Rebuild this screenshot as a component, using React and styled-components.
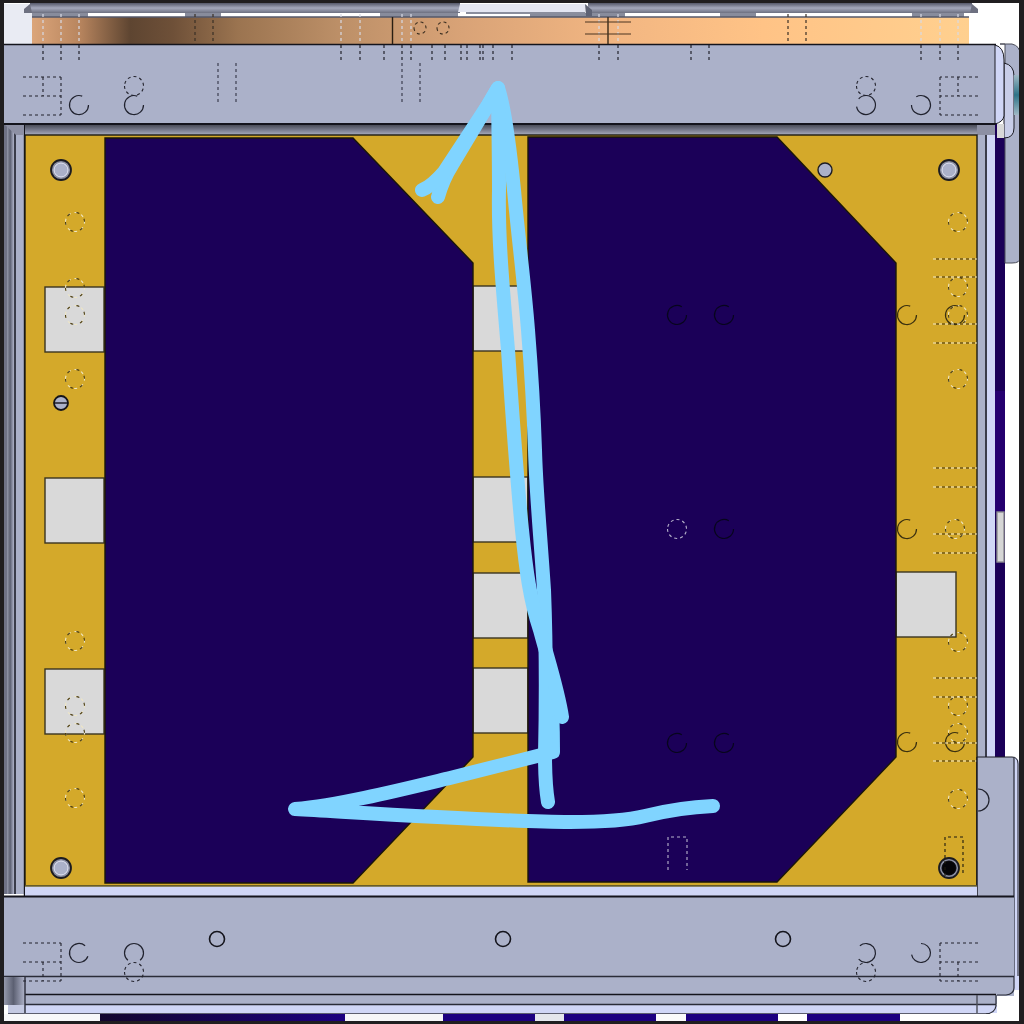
import React from "react";
import styled, { createGlobalStyle } from "styled-components";

const Global = createGlobalStyle`
  html, body { margin: 0; padding: 0; background: #fff; }
`;
const Page = styled.main`
  width: 1024px;
  height: 1024px;
  overflow: hidden;
  background: #fff;
`;
const Drawing = styled.svg`
  display: block;
  width: 1024px;
  height: 1024px;
`;
const Plate = styled.rect`
  fill: ${(p) => p.$fill || "#abb1c9"};
  stroke: ${(p) => p.$edge || "none"};
  stroke-width: ${(p) => p.$w || 1.4};
`;
const Cutout = styled.rect`
  fill: #d9d9d9;
  stroke: #3a3420;
  stroke-width: 1.4;
`;
const Edge = styled.line`
  stroke: ${(p) => p.$c || "#14141c"};
  stroke-width: ${(p) => p.$w || 1.4};
`;
const Hidden = styled.line`
  stroke: ${(p) => p.$c || "#22222c"};
  stroke-width: 1.2;
  stroke-dasharray: 3 3;
`;
const HiddenShape = styled.path`
  fill: none;
  stroke: ${(p) => p.$c || "#22222c"};
  stroke-width: 1.1;
  stroke-dasharray: ${(p) => p.$dash || "3 3"};
`;
const Ring = styled.path`
  fill: none;
  stroke: ${(p) => p.$c || "#20222e"};
  stroke-width: 1.2;
`;
const Hole = styled.circle`
  fill: ${(p) => p.$fill || "none"};
  stroke: ${(p) => p.$c || "#20222e"};
  stroke-width: ${(p) => p.$w || 1.4};
`;
const Board = styled.polygon`
  fill: #1b0058;
  stroke: #1a1608;
  stroke-width: 1.4;
`;
const Scribble = styled.path`
  fill: none;
  stroke: #80d4ff;
  stroke-width: 14;
  stroke-linecap: round;
  stroke-linejoin: round;
`;
const Viewport = styled.rect`
  fill: none;
  stroke: #201e20;
  stroke-width: 4;
`;

/* -- helpers ------------------------------------------------------ */
const arc = (cx, cy, r, from, to) => {
  const rad = (d) => (d * Math.PI) / 180;
  const x0 = cx + r * Math.cos(rad(from));
  const y0 = cy + r * Math.sin(rad(from));
  const x1 = cx + r * Math.cos(rad(to));
  const y1 = cy + r * Math.sin(rad(to));
  const large = (to - from + 360) % 360 > 180 ? 1 : 0;
  return `M${x0.toFixed(1)} ${y0.toFixed(1)}A${r} ${r} 0 ${large} 1 ${x1.toFixed(1)} ${y1.toFixed(1)}`;
};
const circlePath = (cx, cy, r) => `M${cx - r} ${cy}a${r} ${r} 0 1 0 ${2 * r} 0a${r} ${r} 0 1 0 ${-2 * r} 0`;

const YELLOW_DASH = "#4a3c10";
const leftDashed = [222, 288, 315, 379, 641, 706, 733, 798];
const rightDashed = [[958, 222], [958, 287], [958, 315], [958, 379], [955, 529], [958, 642], [958, 706], [958, 733], [958, 799]];
const solidOnYellow = [[907, 315], [955, 315], [907, 529], [907, 742], [955, 742]];
const rightTicks = [259, 277, 324, 343, 468, 487, 534, 553, 678, 697, 743, 761];
const topLong = [43, 61, 79, 341, 360, 402, 411, 599, 618, 921, 940, 958];
const topShort = [384, 691, 709];
const copperOnly = [195, 213, 788, 806];
const ticks = [432, 445, 461, 467, 480, 483, 493, 512];
const barLong = [218, 236, 402, 420];

const cutouts = [
  [45, 287, 59, 65], [45, 478, 59, 65], [45, 669, 59, 65],
  [473, 286, 55, 65], [473, 477, 55, 65], [473, 573, 55, 65], [473, 668, 55, 65],
  [896, 572, 60, 65],
];
const footer = [
  [4, 96, "#f8f8fa"], [100, 245, "url(#footNavy)"], [345, 98, "#f6f6f8"], [443, 92, "#1c0080"],
  [535, 29, "#e4e6ec"], [564, 92, "#1c0080"], [656, 30, "#fafafa"], [686, 92, "#1c0080"],
  [778, 29, "#ffffff"], [807, 93, "#1c0080"], [900, 119, "#ffffff"],
];

function Mounting({ cx, cy, dark }) {
  return (
    <g>
      <Hole cx={cx} cy={cy} r={10} $fill="#8a8ea2" $c="#1b1b20" $w={1.8} />
      <Hole cx={cx} cy={cy} r={7} $fill={dark ? "#040408" : "#abb1c9"} $c={dark ? "#040408" : "#e4e6f4"} $w={1} />
    </g>
  );
}

function Bracket({ x, top, mirror, flip }) {
  const w = 38;
  const x0 = mirror ? x + w : x;
  const x1 = mirror ? x : x + w;
  const ys = [top, top + 19, top + 38];
  const innerY0 = flip ? top + 19 : top;
  const innerY1 = innerY0 + 19;
  const innerX = mirror ? x + w - 20 : x + 20;
  return (
    <g>
      {ys.map((y) => (
        <HiddenShape key={y} d={`M${x0} ${y}H${x1}`} />
      ))}
      <HiddenShape d={`M${x1} ${top}V${top + 38}`} />
      <HiddenShape d={`M${innerX} ${innerY0}V${innerY1}`} />
    </g>
  );
}

export default function App() {
  return (
    <Page>
      <Global />
      <Drawing viewBox="0 0 1024 1024" role="img" aria-label="CAD view of an enclosure with a hand-drawn blue arrow">
        <defs>
          <linearGradient id="copper" x1="0" x2="1" y1="0" y2="0">
            <stop offset="0" stopColor="#dba57a" />
            <stop offset="0.05" stopColor="#b9865f" />
            <stop offset="0.105" stopColor="#5e4531" />
            <stop offset="0.15" stopColor="#6e5038" />
            <stop offset="0.22" stopColor="#9b7450" />
            <stop offset="0.33" stopColor="#bd9068" />
            <stop offset="0.46" stopColor="#d9a377" />
            <stop offset="0.62" stopColor="#f2b682" />
            <stop offset="0.78" stopColor="#ffc386" />
            <stop offset="1" stopColor="#ffd08f" />
          </linearGradient>
          <linearGradient id="topRail" x1="0" x2="0" y1="0" y2="1">
            <stop offset="0" stopColor="#55586a" />
            <stop offset="0.5" stopColor="#a4a8bc" />
            <stop offset="1" stopColor="#6d7080" />
          </linearGradient>
          <linearGradient id="shelf" x1="0" x2="0" y1="0" y2="1">
            <stop offset="0" stopColor="#4a4c58" />
            <stop offset="0.55" stopColor="#7d8092" />
            <stop offset="1" stopColor="#a9adbe" />
          </linearGradient>
          <linearGradient id="post" x1="0" x2="1" y1="0" y2="0">
            <stop offset="0" stopColor="#9599ac" />
            <stop offset="0.45" stopColor="#5c6072" />
            <stop offset="1" stopColor="#b0b4ca" />
          </linearGradient>
          <linearGradient id="footNavy" x1="0" x2="1" y1="0" y2="0">
            <stop offset="0" stopColor="#12062e" />
            <stop offset="1" stopColor="#1c0080" />
          </linearGradient>
          <linearGradient id="teal" x1="0" x2="0" y1="0" y2="1">
            <stop offset="0" stopColor="#9fb8c4" />
            <stop offset="0.5" stopColor="#2f7488" />
            <stop offset="1" stopColor="#9fb8c4" />
          </linearGradient>
        </defs>

        <Plate x={0} y={0} width={1024} height={1024} $fill="#ffffff" />
        <Plate x={4} y={4} width={28} height={40} $fill="#e9ebf3" />

        {/* top lip and copper bar */}
        <Plate x={32} y={17} width={937} height={27} $fill="url(#copper)" />
        <Plate x={32} y={13} width={937} height={4} $fill="#ffffff" />
        {[[32, 56], [185, 36], [380, 78], [530, 60], [585, 40], [720, 36], [912, 52]].map(([x, w]) => (
          <Plate key={x} x={x} y={13} width={w} height={4} $fill="#888c9c" />
        ))}
        <Edge x1={32} x2={969} y1={17} y2={17} $c="#55586a" />
        <Plate x={30} y={3} width={430} height={10} $fill="url(#topRail)" />
        <Plate x={588} y={3} width={384} height={10} $fill="url(#topRail)" />
        <path d="M30 4L24 9L24 13L32 13Z" fill="#6d7080" />
        <path d="M972 4L978 9L978 13L970 13Z" fill="#6d7080" />
        <path d="M460 4H466V12H458Z" fill="#e4e6f2" />
        <Plate x={466} y={4} width={119} height={8} $fill="#e4e6f2" />
        <Plate x={466} y={12} width={119} height={2} $fill="#8a8e9e" />
        <path d="M585 4L592 10V16H586Z" fill="#5e6274" />

        {/* side structure */}
        <Plate x={4} y={124} width={3} height={770} $fill="#6f7286" />
        <Plate x={7} y={124} width={7} height={770} $fill="url(#post)" />
        <Plate x={14} y={124} width={2} height={770} $fill="#3a3c4a" />
        <Plate x={16} y={124} width={8} height={770} $fill="#abb1c9" />
        <Edge x1={24.5} x2={24.5} y1={124} y2={896} />
        <Plate x={995} y={124} width={10} height={633} $fill="#1b0058" />
        <Plate x={995} y={391} width={10} height={121} $fill="#25006f" />
        <Plate x={997} y={512} width={7} height={50} $fill="#d6d6d6" $edge="#8d8d92" />
        <Plate x={977} y={124} width={8} height={633} $fill="#abb1c9" />
        <Plate x={985} y={124} width={2} height={633} $fill="#3a3c4a" />
        <Plate x={987} y={124} width={8} height={633} $fill="#d0d6f6" />

        {/* top right flange */}
        <path d="M1000 44H1012Q1020 46 1020 54V258Q1020 263 1012 263H1005V44Z" fill="#abb1c9" stroke="#4a4c58" strokeWidth="1" />
        <path d="M1004 63Q1014 65 1014 76V128Q1014 138 1004 138Z" fill="#c8cde8" stroke="#1c1c24" strokeWidth="1" />
        <Plate x={1014} y={75} width={6} height={40} $fill="url(#teal)" />
        <Plate x={997} y={124} width={7} height={14} $fill="#d8d8d8" />

        {/* top flange */}
        <Plate x={4} y={45} width={991} height={79} $fill="#abb1c9" />
        <path d="M995 45Q1004 47 1004 60V116Q1003 122 995 124Z" fill="#d0d6f6" stroke="#1c1c24" strokeWidth="1" />
        <Edge x1={4} x2={996} y1={44.5} y2={44.5} $w={1.6} />
        <Edge x1={4} x2={996} y1={124} y2={124} $w={1.8} />
        <Plate x={25} y={125} width={952} height={10} $fill="url(#shelf)" />
        <Plate x={977} y={125} width={18} height={10} $fill="#8d90a4" />
        <path d="M5 125H24V135H16Z" fill="#8d90a4" />

        {/* yellow sheet */}
        <Plate x={25} y={135} width={952} height={751} $fill="#d4a92a" $edge="#1c1a12" />
        {cutouts.map(([x, y, w, h]) => (
          <Cutout key={`${x}-${y}`} x={x} y={y} width={w} height={h} />
        ))}
        <Board points="105,138 353,138 473,263 473,757 353,883 105,883" />
        <Board points="528,137 777,137 896,263 896,757 777,882 528,882" />

        {/* mounting holes */}
        <Mounting cx={61} cy={170} />
        <Mounting cx={949} cy={170} />
        <Mounting cx={61} cy={868} />
        <Mounting cx={949} cy={868} dark />
        <Hole cx={825} cy={170} r={7} $fill="#abb1c9" $c="#1c1c24" />
        <Hole cx={61} cy={403} r={7} $fill="#abb1c9" $c="#14141a" $w={1.8} />
        <Edge x1={54} x2={68} y1={403} y2={403} />

        {/* hidden features on the yellow sheet */}
        {leftDashed.map((y) => (
          <g key={y}>
            <HiddenShape d={circlePath(75, y, 9.5)} $c="#efe6c4" $dash="3 4" />
            <HiddenShape d={circlePath(75, y, 9.5)} $c={YELLOW_DASH} $dash="3 7" />
          </g>
        ))}
        {rightDashed.map(([x, y]) => (
          <g key={`${x}-${y}`}>
            <HiddenShape d={circlePath(x, y, 9.5)} $c="#efe6c4" $dash="3 4" />
            <HiddenShape d={circlePath(x, y, 9.5)} $c={YELLOW_DASH} $dash="3 7" />
          </g>
        ))}
        {solidOnYellow.map(([x, y]) => (
          <Ring key={`${x}-${y}`} d={arc(x, y, 9.5, 0, 290)} $c="#3a3010" />
        ))}
        {rightTicks.map((y) => (
          <g key={y}>
            <Hidden x1={933} x2={977} y1={y} y2={y} $c="#f0e8c8" />
            <Hidden x1={936} x2={977} y1={y} y2={y} $c="#3c3010" />
          </g>
        ))}
        <HiddenShape d="M945 876V837H963V876" $c="#1c1a10" />

        {/* marks on the navy boards */}
        {[[677, 315], [724, 315], [724, 529], [677, 743], [724, 743]].map(([x, y]) => (
          <Ring key={`${x}-${y}`} d={arc(x, y, 9.5, 0, 300)} $c="#07051c" />
        ))}
        <HiddenShape d={circlePath(677, 529, 9.5)} $c="#b8b4cc" />
        <HiddenShape d="M668 870V837H687V870" $c="#b8b4cc" />

        {/* lines crossing the copper bar and top flange */}
        {topLong.map((x) => (
          <g key={x}>
            <Hidden x1={x} x2={x} y1={14} y2={44} $c="#d8dae4" />
            <Hidden x1={x} x2={x} y1={45} y2={61} />
          </g>
        ))}
        {copperOnly.map((x) => (
          <Hidden key={x} x1={x} x2={x} y1={14} y2={44} $c="#3a3026" />
        ))}
        {topShort.map((x) => (
          <Hidden key={x} x1={x} x2={x} y1={45} y2={61} />
        ))}
        {ticks.map((x) => (
          <Hidden key={x} x1={x} x2={x} y1={45} y2={61} />
        ))}
        {barLong.map((x) => (
          <Hidden key={x} x1={x} x2={x} y1={63} y2={103} $c="#3c3e50" />
        ))}
        <Edge x1={392.5} x2={392.5} y1={17} y2={44} $c="#2a1e12" />
        <Edge x1={608} x2={608} y1={17} y2={44} $c="#3a2a18" />
        <Edge x1={585} x2={631} y1={22} y2={22} $c="#4a3520" $w={1} />
        <Edge x1={585} x2={631} y1={34} y2={34} $c="#4a3520" $w={1} />
        <HiddenShape d={circlePath(420, 28, 6)} $c="#3a2e20" />
        <HiddenShape d={circlePath(443, 28, 6)} $c="#3a2e20" />

        {/* top flange symbols */}
        <Bracket x={23} top={77} />
        <Bracket x={940} top={77} mirror />
        <Ring d={arc(79, 105, 9.5, 0, 290)} />
        <HiddenShape d={circlePath(134, 86, 9.5)} />
        <Ring d={arc(134, 105, 9.5, 0, 290)} />
        <HiddenShape d={circlePath(866, 86, 9.5)} />
        <Ring d={arc(866, 105, 9.5, 220, 170)} />
        <Ring d={arc(921, 105, 9.5, 240, 180)} />

        {/* lower right corner block */}
        <path d="M977 757H1012Q1019 757 1019 764V990H1014V896H977Z" fill="#d0d6f6" />
        <Plate x={977} y={757} width={37} height={140} $fill="#abb1c9" />
        <path d="M977 757H1012Q1018 757 1018 764V976" fill="none" stroke="#1c1c24" strokeWidth="1" />
        <Edge x1={977} x2={977} y1={757} y2={896} />
        <Edge x1={1014} x2={1014} y1={757} y2={976} $c="#3c3e4c" />

        {/* bottom band and flange */}
        <Plate x={25} y={886} width={952} height={10} $fill="#d0d6f6" />
        <Edge x1={25} x2={977} y1={886} y2={886} $c="#6f6530" />
        <Plate x={4} y={976} width={1010} height={20} $fill="#abb1c9" />
        <Plate x={4} y={896} width={1010} height={81} $fill="#abb1c9" />
        <Edge x1={4} x2={1014} y1={896.5} y2={896.5} $w={1.8} />
        <Edge x1={4} x2={1014} y1={976.5} y2={976.5} $c="#2a2c38" />
        <Ring d={arc(978, 800, 11, 270, 90)} />
        <path d="M1014 976V988Q1014 994 1006 995H997" fill="none" stroke="#2a2c38" strokeWidth="1.2" />

        {/* bottom rails */}
        <Plate x={4} y={977} width={21} height={28} $fill="url(#post)" />
        <Plate x={25} y={995} width={972} height={9} $fill="#abb1c9" />
        <Plate x={25} y={1005} width={972} height={8} $fill="#d0d6f6" />
        <Plate x={8} y={1005} width={17} height={8} $fill="#c4c9e2" />
        <Edge x1={25} x2={996} y1={994.5} y2={994.5} $w={1.6} />
        <Edge x1={25} x2={996} y1={1004.5} y2={1004.5} $c="#2a2c38" />
        <Edge x1={8} x2={990} y1={1013.5} y2={1013.5} $c="#5c5e6e" $w={1} />
        <path d="M996 995V1006Q995 1013 986 1014" fill="none" stroke="#2a2c38" strokeWidth="1.2" />
        <Edge x1={25} x2={25} y1={977} y2={1013} $c="#2a2c38" />
        <Edge x1={977} x2={977} y1={995} y2={1013} $c="#4a4c58" />

        {footer.map(([x, w, fill]) => (
          <Plate key={x} x={x} y={1014} width={w} height={8} $fill={fill} />
        ))}

        {/* bottom flange symbols */}
        <Bracket x={23} top={943} flip />
        <Bracket x={940} top={943} mirror flip />
        <Ring d={arc(79, 953, 9.5, 20, 310)} />
        <Ring d={arc(134, 953, 9.5, 130, 50)} />
        <HiddenShape d={circlePath(134, 972, 9.5)} />
        <Ring d={arc(866, 953, 9.5, 230, 140)} />
        <HiddenShape d={circlePath(866, 972, 9.5)} />
        <Ring d={arc(921, 953, 9.5, 270, 170)} />
        {[217, 503, 783].map((x) => (
          <Hole key={x} cx={x} cy={939} r={7.5} $c="#14141c" $w={1.6} />
        ))}

        {/* blue hand-drawn arrow */}
        <Scribble d="M713 806C690 807 665 811 645 816C625 821 600 822 570 822C510 822 400 815 295 809C340 805 400 790 450 778C490 768 530 758 553 752C553 730 552 700 550 677" />
        <Scribble d="M438 197C441 186 445 176 452 165L488 105L498 88C504 106 510 150 514 190C518 235 524 280 528 330C532 380 534 420 535 450C536 490 540 530 544 590C546 640 546 710 545 755C545 770 546 790 548 802" />
        <Scribble d="M422 190C430 187 437 180 444 172L488 105L498 88C498 110 499 150 499 190C498 240 503 290 508 350C512 410 516 470 522 530C526 570 530 600 540 630C548 660 558 690 562 717" />

        <Viewport x={1} y={1} width={1021} height={1022} />
        <Plate x={0} y={0} width={4} height={1024} $fill="#201e20" />
        <Plate x={1019} y={0} width={5} height={1024} $fill="#201e20" />
      </Drawing>
    </Page>
  );
}
